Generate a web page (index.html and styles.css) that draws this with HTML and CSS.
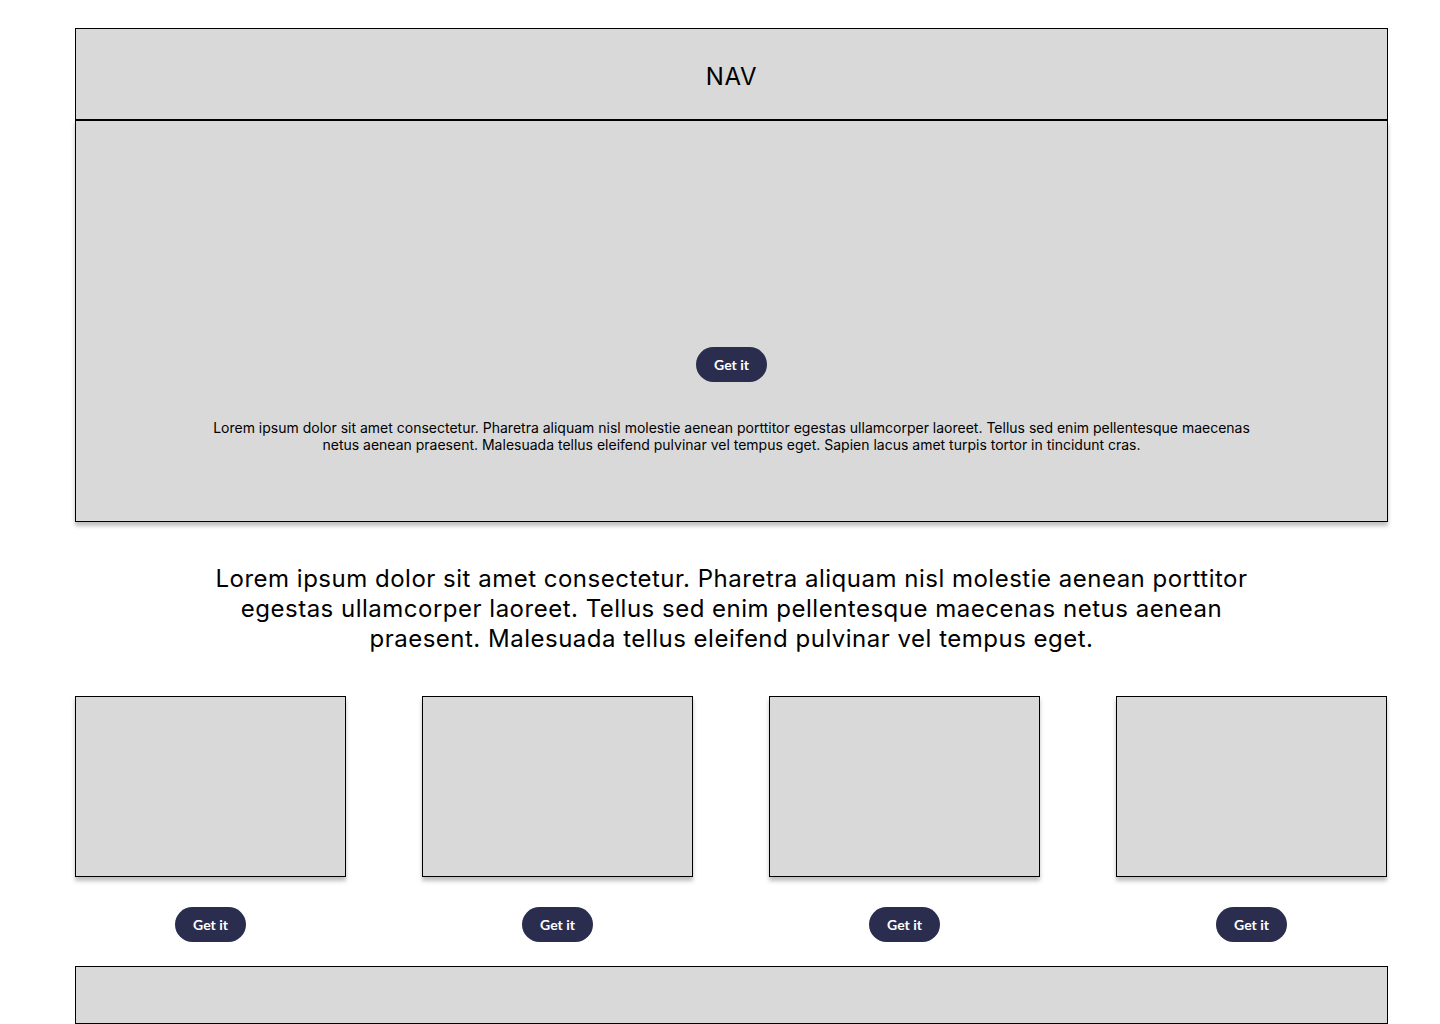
FILE: index.html
```html
<!doctype html>
<html lang="en">
  <head>
    <meta charset="UTF-8" />
    <meta name="viewport" content="width=device-width, initial-scale=1.0" />
    <title>Wireframe</title>
    <link rel="stylesheet" href="styles.css">
  </head>
  <body>
    <div class="page">
      <header class="nav">NAV</header>

      <section class="hero">
        <button class="get-button">Get it</button>
        <p class="hero-text">
          Lorem ipsum dolor sit amet consectetur. Pharetra aliquam nisl molestie aenean porttitor egestas ullamcorper laoreet. Tellus sed enim pellentesque maecenas netus aenean praesent. Malesuada tellus eleifend pulvinar vel tempus eget. Sapien lacus amet turpis tortor in tincidunt cras.
        </p>
      </section>

      <p class="intro">
        Lorem ipsum dolor sit amet consectetur. Pharetra aliquam nisl molestie aenean porttitor egestas ullamcorper laoreet. Tellus sed enim pellentesque maecenas netus aenean praesent. Malesuada tellus eleifend pulvinar vel tempus eget.
      </p>

      <div class="cards">
        <div class="card-item">
          <div class="card"></div>
          <button class="get-button">Get it</button>
        </div>
        <div class="card-item">
          <div class="card"></div>
          <button class="get-button">Get it</button>
        </div>
        <div class="card-item">
          <div class="card"></div>
          <button class="get-button">Get it</button>
        </div>
        <div class="card-item">
          <div class="card"></div>
          <button class="get-button">Get it</button>
        </div>
      </div>

      <footer class="footer"></footer>
    </div>
  </body>
</html>
```

FILE: styles.css
```css
body {
  margin: 0;
  background: #ffffff;
  font-family: Inter, "Noto Sans", sans-serif;
  color: #000000;
}
.page {
  width: 1313px;
  margin-left: 75px;
  padding-top: 28px;
}
.nav {
  box-sizing: border-box;
  height: 92px;
  background: #d9d9d9;
  border: 1px solid #000000;
  display: flex;
  align-items: center;
  justify-content: center;
  font-size: 24px;
  letter-spacing: 0.6px;
  padding-top: 4px;
}
.hero {
  box-sizing: border-box;
  height: 402px;
  background: #d9d9d9;
  border: 1px solid #000000;
  box-shadow: 0 4px 4px rgba(0, 0, 0, 0.25);
  display: flex;
  flex-direction: column;
  align-items: center;
  padding-top: 226px;
}
.hero-text {
  width: 1050px;
  margin: 37px 0 0;
  font-size: 14px;
  line-height: 17px;
  text-align: center;
}
.get-button {
  width: 71px;
  height: 35px;
  border: none;
  border-radius: 18px;
  background: #2a2d4e;
  color: #ffffff;
  font-family: Lato, sans-serif;
  font-weight: 700;
  font-size: 14px;
  padding: 0;
  cursor: pointer;
}
.intro {
  width: 1060px;
  margin: 42px auto 42px;
  font-size: 24px;
  line-height: 30px;
  letter-spacing: 0.5px;
  text-align: center;
}
.cards {
  display: flex;
  gap: 76px;
}
.card-item {
  width: 271px;
  display: flex;
  flex-direction: column;
  align-items: center;
  gap: 30px;
}
.card {
  box-sizing: border-box;
  width: 271px;
  height: 181px;
  background: #d9d9d9;
  border: 1px solid #000000;
  box-shadow: 0 4px 4px rgba(0, 0, 0, 0.25);
}
.footer {
  box-sizing: border-box;
  height: 58px;
  margin-top: 24px;
  background: #d9d9d9;
  border: 1px solid #000000;
}
```
